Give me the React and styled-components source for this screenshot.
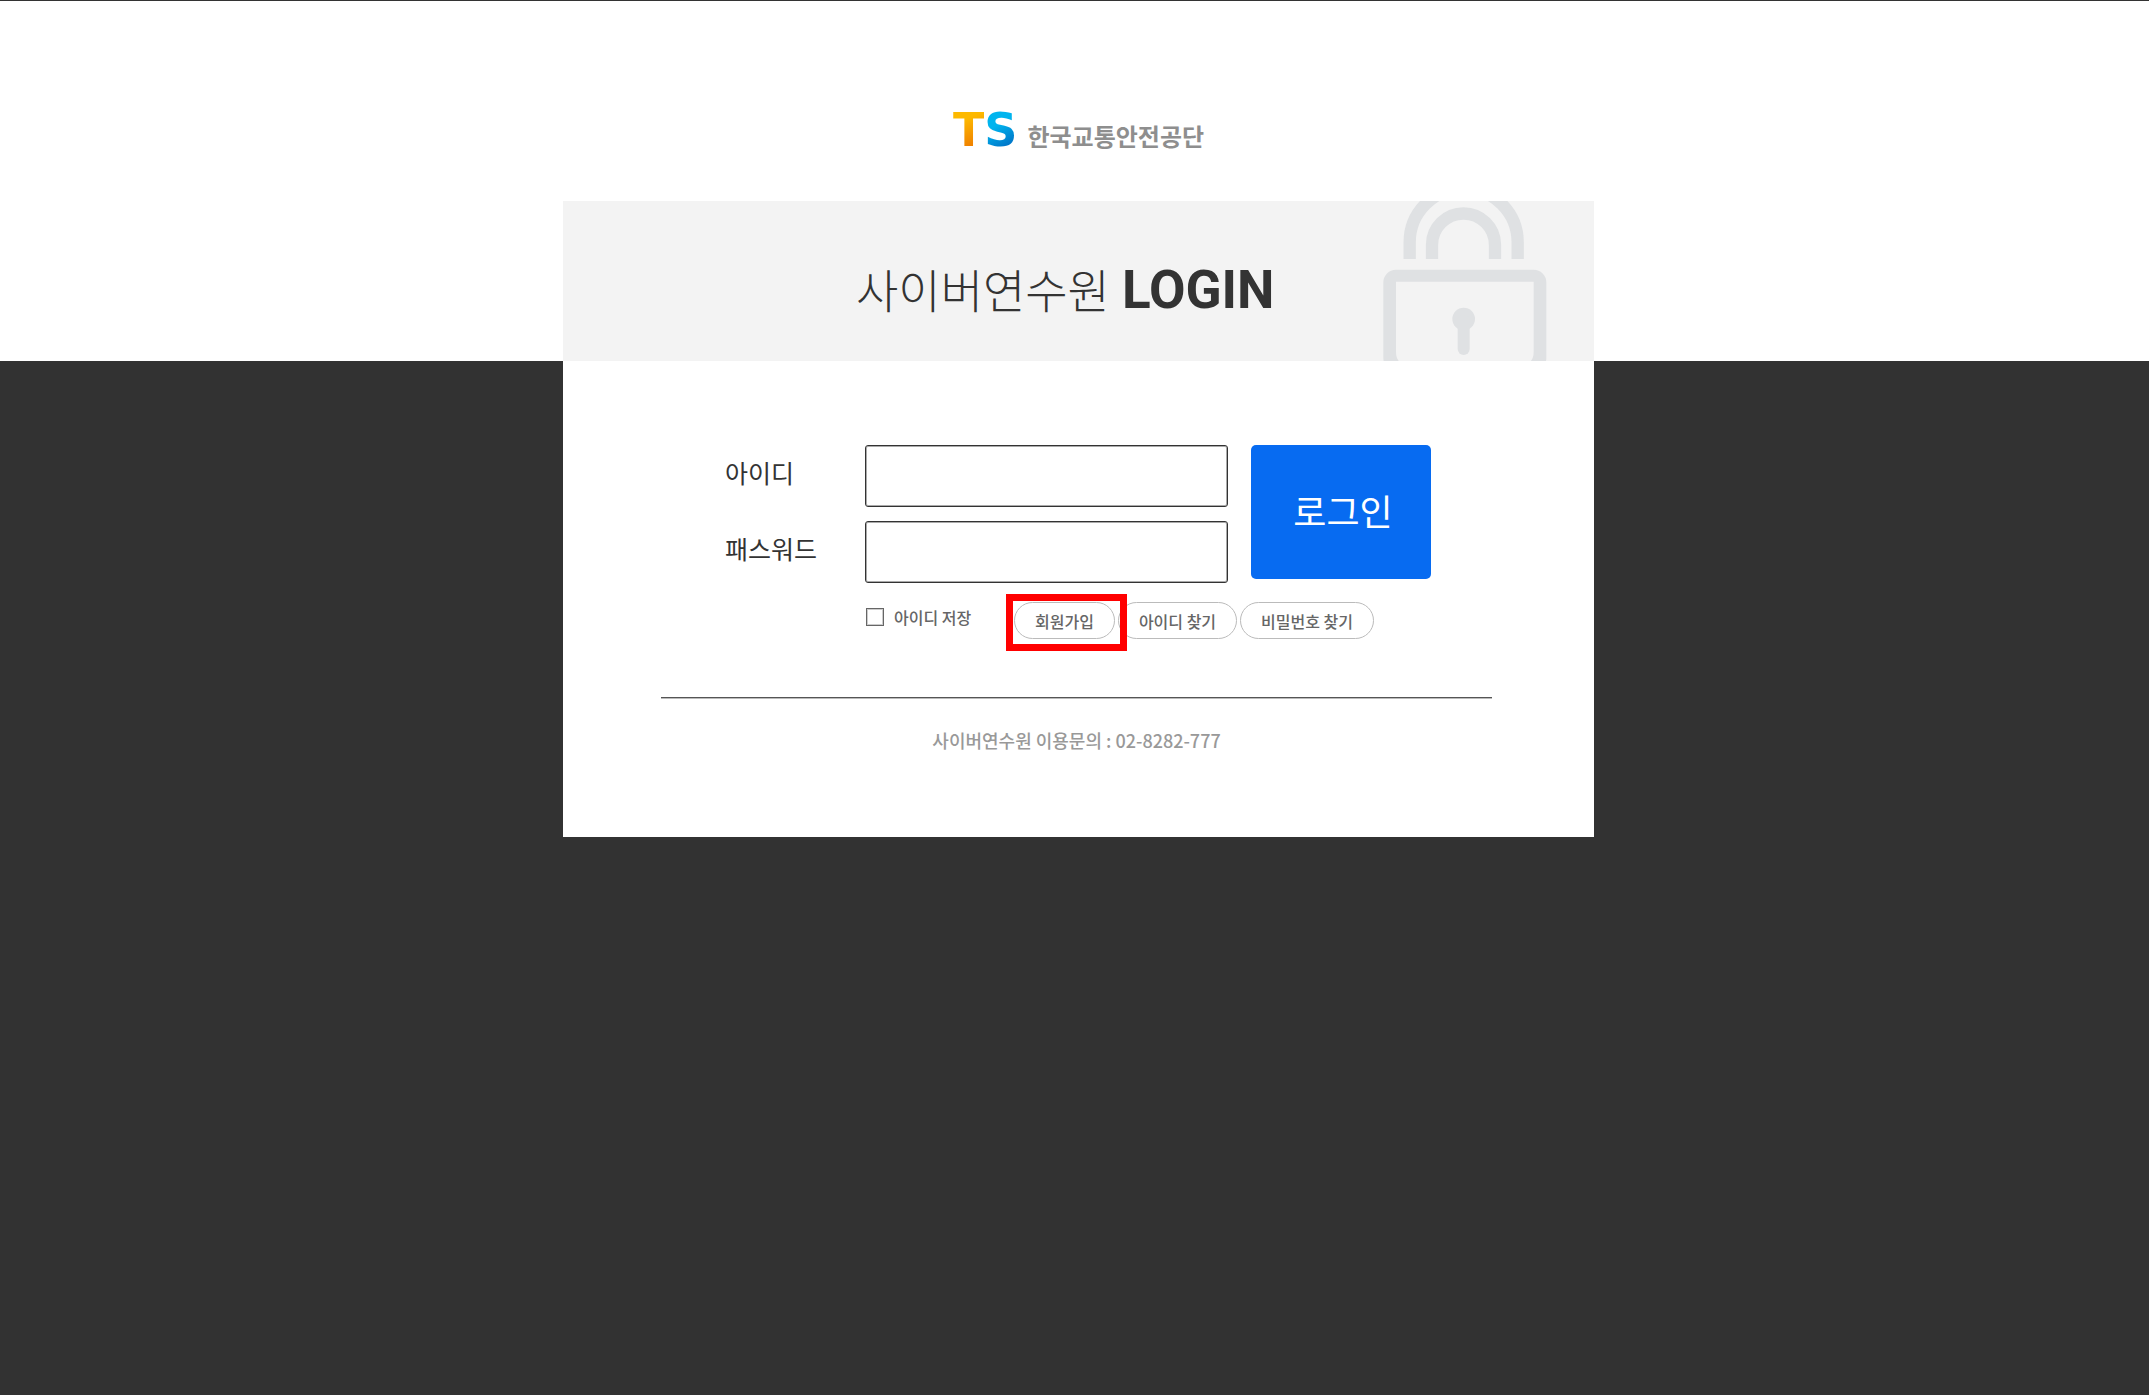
import * as React from "react"
import styled, { createGlobalStyle } from "styled-components"

const GlobalStyle = createGlobalStyle`
  * {
    box-sizing: border-box;
  }
  body {
    margin: 0;
    background: #323232;
    font-family: "Noto Sans CJK KR", sans-serif;
    color: #333;
  }
  button,
  input {
    font-family: inherit;
  }
`

const Banner = styled.header`
  background: #fff;
  border-top: 1px solid #333;
  padding-left: 8px;
`

const Container = styled.div`
  width: 100%;
  max-width: 1031px;
  margin: 0 auto;
`

const LogoRow = styled.div`
  display: flex;
  justify-content: center;
  align-items: center;
  height: 200px;
  padding-top: 58px;
`

const Logo = styled.a`
  display: flex;
  align-items: baseline;
  text-decoration: none;
`

const LogoLetter = styled.span`
  font-family: "DejaVu Sans", sans-serif;
  font-size: 46px;
  line-height: 52px;
  font-weight: 700;
  color: transparent;
  background: ${({ $fill }) => $fill};
  background-clip: text;
`

const LogoName = styled.span`
  margin-left: 10px;
  font-size: 24px;
  font-weight: 700;
  color: #8e8e8e;
`

const TitleBar = styled.div`
  display: flex;
  justify-content: space-between;
  height: 160px;
  padding: 0 46px 0 293px;
  background: #f3f3f3;
`

const Title = styled.h1`
  display: flex;
  align-items: baseline;
  gap: 12px;
  margin: 0;
  padding-top: 51px;
  font-size: 46px;
  line-height: 72px;
  font-weight: 300;
  white-space: nowrap;

  strong {
    font-family: Roboto, "Noto Sans CJK KR", sans-serif;
    font-size: 53px;
    font-weight: 700;
  }
`

const LockSvg = styled.svg`
  flex: none;
  width: 168px;
  height: 160px;
`

const Main = styled.main`
  padding-left: 8px;
`

const Card = styled(Container)`
  padding: 84px 102px 81px 98px;
  background: #fff;
`

const Form = styled.form`
  display: flex;
  gap: 23px;
  padding: 0 61px 0 64px;
`

const Fields = styled.div`
  flex: 1;
`

const Field = styled.div`
  display: flex;
  margin-bottom: 14px;
`

const FieldLabel = styled.label`
  width: 140px;
  font-size: 25px;
  line-height: 54px;
`

const TextInput = styled.input`
  flex: 1;
  min-width: 0;
  height: 62px;
  padding: 0 16px;
  border: 1px solid #333;
  border-radius: 3px;
  box-shadow: inset 0 0 0 1px #aaa;
  background: #fff;
  font-size: 20px;
`

const SubmitButton = styled.button`
  width: 180px;
  height: 134px;
  padding: 0 0 4px 4px;
  border: 0;
  border-radius: 5px;
  background: #076bf1;
  color: #fff;
  font-size: 36px;
  font-weight: 400;
  cursor: pointer;
`

const Options = styled.div`
  display: flex;
  align-items: flex-start;
  margin-top: 5px;
  padding-left: 205px;
`

const SaveLabel = styled.label`
  display: flex;
  align-items: center;
  gap: 10px;
  width: 148px;
  height: 30px;
  font-size: 16px;
  font-weight: 500;
  color: #666;
`

const Checkbox = styled.input`
  appearance: none;
  width: 18px;
  height: 18px;
  margin: 0;
  border: 1px solid #666;
  box-shadow: inset 0 0 0 1px #ccc;
  background: #fff;

  &:checked {
    background: #666;
  }
`

const Links = styled.div`
  display: flex;
  gap: 3px;
`

const PillLink = styled.a`
  position: relative;
  height: 37px;
  padding: 0 20px;
  border: 1px solid #bbb;
  border-radius: 19px;
  font-size: 16px;
  line-height: 36px;
  font-weight: 500;
  color: #666;
  text-decoration: none;
  white-space: nowrap;
`

const Highlight = styled.span`
  position: absolute;
  z-index: 1;
  top: -9px;
  right: -13px;
  bottom: -13px;
  left: -9px;
  border: 7px solid #f00;
  pointer-events: none;
`

const Contact = styled.p`
  margin: 58px 0 0;
  padding-top: 26px;
  border-top: 1px solid #555;
  box-shadow: inset 0 1px 0 #bbb;
  font-size: 18px;
  line-height: 32px;
  font-weight: 500;
  text-align: center;
  color: #999;
`

const LockIcon = () => (
  <LockSvg viewBox="0 0 504 480" fill="none" aria-hidden="true">
    <g stroke="#dfe1e3" strokeWidth="37">
      <path d="M89 174V124a162 162 0 0 1 324 0V174" />
      <path d="M156 174V132a94.5 94.5 0 0 1 189 0V174" />
    </g>
    <path
      fill="#dfe1e3"
      fillRule="evenodd"
      d="M48 206H461a38 38 0 0 1 38 38V470a50 50 0 0 1 -50 50H60a50 50 0 0 1 -50 -50V244a38 38 0 0 1 38 -38ZM48 242V452q0 40 40 40H421q40 0 40 -40V242Z"
    />
    <circle cx="251" cy="354" r="34" fill="#dfe1e3" />
    <path d="M251 360V444" stroke="#dfe1e3" strokeWidth="36" strokeLinecap="round" />
  </LockSvg>
)

const links = [
  { text: "회원가입", active: true },
  { text: "아이디 찾기" },
  { text: "비밀번호 찾기" },
]

const App = () => {
  return (
    <>
      <GlobalStyle />
      <Banner>
        <Container>
          <LogoRow>
            <Logo href="#">
              <LogoLetter $fill="linear-gradient(160deg, #fdb900 30%, #f08300 75%)">T</LogoLetter>
              <LogoLetter $fill="linear-gradient(150deg, #00b4ee 40%, #0072c6 80%)">S</LogoLetter>
              <LogoName>한국교통안전공단</LogoName>
            </Logo>
          </LogoRow>
          <TitleBar>
            <Title>
              사이버연수원 <strong>LOGIN</strong>
            </Title>
            <LockIcon />
          </TitleBar>
        </Container>
      </Banner>
      <Main>
        <Card>
          <Form onSubmit={e => e.preventDefault()}>
            <Fields>
              <Field>
                <FieldLabel htmlFor="userId">아이디</FieldLabel>
                <TextInput id="userId" type="text" />
              </Field>
              <Field>
                <FieldLabel htmlFor="password">패스워드</FieldLabel>
                <TextInput id="password" type="password" />
              </Field>
            </Fields>
            <SubmitButton type="submit">로그인</SubmitButton>
          </Form>
          <Options>
            <SaveLabel>
              <Checkbox type="checkbox" />
              아이디 저장
            </SaveLabel>
            <Links>
              {links.map(({ text, active }) => (
                <PillLink key={text} href="#">
                  {text}
                  {active && <Highlight />}
                </PillLink>
              ))}
            </Links>
          </Options>
          <Contact>사이버연수원 이용문의 : 02-8282-777</Contact>
        </Card>
      </Main>
    </>
  )
}

export default App
